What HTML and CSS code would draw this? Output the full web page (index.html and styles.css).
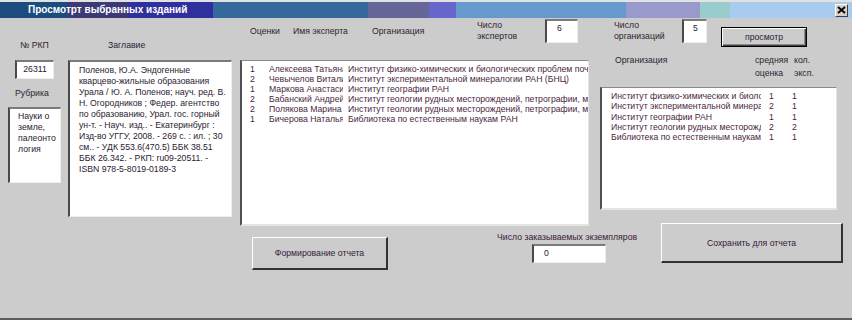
FILE: index.html
```html
<!DOCTYPE html>
<html lang="ru">
<head>
    <meta charset="UTF-8">
    <title>Просмотрт выбранных изданий</title>
    <link rel="stylesheet" href="styles.css">
</head>
<body>
    <div class="window">
        <div class="titlebar">
            <span class="title">Просмотрт выбранных изданий</span>
            <span class="close">
                <svg width="9" height="8" viewBox="0 0 9 8"><path d="M1 1L8 7M8 1L1 7" stroke="#000" stroke-width="1.8" fill="none"/></svg>
            </span>
        </div>

        <div class="form">
            <!-- карточка издания -->
            <div class="left">
                <div class="left-head">
                    <span class="lbl-rkp">№ РКП</span>
                    <span>Заглавие</span>
                </div>
                <div class="left-body">
                    <div class="rkp-col">
                        <div class="field rkp">26311</div>
                        <div class="lbl-rubric">Рубрика</div>
                        <div class="field rubric">Науки о<br>земле,<br>палеонто<br>логия</div>
                    </div>
                    <div class="field title-box">
                        Поленов, Ю.А. Эндогенные<br>
                        кварцево-жильные образования<br>
                        Урала / Ю. А. Поленов; науч. ред. В.<br>
                        Н. Огородников ; Федер. агентство<br>
                        по образованию, Урал. гос. горный<br>
                        ун-т. - Науч. изд.. - Екатеринбург :<br>
                        Изд-во УГГУ, 2008. - 269 с. : ил. ; 30<br>
                        см.. - УДК 553.6(470.5) ББК 38.51<br>
                        ББК 26.342. - РКП: ru09-20511. -<br>
                        ISBN 978-5-8019-0189-3
                    </div>
                </div>
            </div>

            <div class="main">
                <div class="topbar">
                    <div class="list-head">
                        <span class="h-score">Оценки</span>
                        <span class="h-name">Имя эксперта</span>
                        <span class="h-org">Организация</span>
                    </div>
                    <div class="count-lbl">Число<br>экспертов</div>
                    <div class="field num num-exp">6</div>
                    <div class="count-lbl count-org">Число<br>организаций</div>
                    <div class="field num num-org">5</div>
                    <button class="btn btn-default">просмотр</button>
                </div>

                <div class="panels">
                    <!-- оценки экспертов -->
                    <div class="experts">
                        <div class="listbox expert-list">
                            <div class="row"><span class="c-score">1</span><span class="c-name">Алексеева Татьяна</span><span class="c-org">Институт физико-химических и биологических проблем почвоведения РАН</span></div>
                            <div class="row"><span class="c-score">2</span><span class="c-name">Чевычелов Виталий</span><span class="c-org">Институт экспериментальной минералогии РАН (БНЦ)</span></div>
                            <div class="row"><span class="c-score">1</span><span class="c-name">Маркова Анастасия</span><span class="c-org">Институт географии РАН</span></div>
                            <div class="row"><span class="c-score">2</span><span class="c-name">Бабанский Андрей</span><span class="c-org">Институт геологии рудных месторождений, петрографии, минералогии и геохимии РАН</span></div>
                            <div class="row"><span class="c-score">2</span><span class="c-name">Полякова Марина</span><span class="c-org">Институт геологии рудных месторождений, петрографии, минералогии и геохимии РАН</span></div>
                            <div class="row"><span class="c-score">1</span><span class="c-name">Бичерова Наталья</span><span class="c-org">Библиотека по естественным наукам РАН</span></div>
                        </div>
                        <div class="experts-foot">
                            <button class="btn btn-report">Формирование отчета</button>
                            <div class="copies">
                                <div class="copies-lbl">Число заказываемых экземпляров</div>
                                <div class="field copies-input">0</div>
                            </div>
                        </div>
                    </div>

                    <!-- сводка по организациям -->
                    <div class="orgs">
                        <div class="orgs-head">
                            <span class="oh-org">Организация</span>
                            <span>средняя</span>
                            <span>кол.</span>
                            <span></span>
                            <span>оценка</span>
                            <span>эксп.</span>
                        </div>
                        <div class="listbox org-list">
                            <div class="row"><span class="c-o">Институт физико-химических и биологических проблем почвоведения РАН</span><span class="c-avg">1</span><span>1</span></div>
                            <div class="row"><span class="c-o">Институт экспериментальной минералогии РАН (БНЦ)</span><span class="c-avg">2</span><span>1</span></div>
                            <div class="row"><span class="c-o">Институт географии РАН</span><span class="c-avg">1</span><span>1</span></div>
                            <div class="row"><span class="c-o">Институт геологии рудных месторождений, петрографии, минералогии и геохимии РАН</span><span class="c-avg">2</span><span>2</span></div>
                            <div class="row"><span class="c-o">Библиотека по естественным наукам РАН</span><span class="c-avg">1</span><span>1</span></div>
                        </div>
                        <button class="btn btn-save">Сохранить для отчета</button>
                    </div>
                </div>
            </div>
        </div>
    </div>
</body>
</html>
```

FILE: styles.css
```css
body {
    margin: 0;
    background: #cccccc;
    font-family: "Liberation Sans", Arial, sans-serif;
    font-size: 8.7px;
    color: #2d2430;
}

.window {
    width: 852px;
    height: 320px;
    box-sizing: border-box;
    background: #cccccc;
    border-top: 2px solid #e2e2e2;
    border-bottom: 2px solid #5c5c5c;
    overflow: hidden;
}

.titlebar {
    display: flex;
    align-items: center;
    height: 16px;
    background: linear-gradient(to right,
        #1b4c7e 0 67px,
        #3b3a77 67px 128px,
        #2f2f9e 128px 213px,
        #35689b 213px 368px,
        #666699 368px 429px,
        #6666cc 429px 456px,
        #6699cc 456px 626px,
        #9999cc 626px 700px,
        #99cccc 700px 730px,
        #a8cbf0 730px);
}

.title {
    padding-left: 28px;
    color: #fff;
    font-weight: bold;
    font-size: 10px;
    line-height: 16px;
}

.close {
    margin-left: auto;
    margin-right: 4px;
    width: 13px;
    height: 13px;
    box-sizing: border-box;
    background: #d4d0c8;
    border: 1px solid;
    border-color: #fff #404040 #404040 #fff;
    display: flex;
    align-items: center;
    justify-content: center;
}

.form {
    display: flex;
    align-items: flex-start;
    padding-left: 8px;
}

.field {
    background: #fff;
    box-sizing: border-box;
    border-style: solid;
    border-width: 2px 1px 1px 2px;
    border-color: #7a7a7a #eeeeee #eeeeee #4a4a4a;
    color: #2a1a30;
}

/* левая колонка */
.left {
    flex: none;
    width: 224px;
    margin-top: 22px;
}

.left-head {
    display: flex;
    height: 11px;
    line-height: 11px;
    margin-bottom: 9px;
}

.lbl-rkp {
    margin-left: 12px;
    width: 88px;
}

.left-body {
    display: flex;
    align-items: flex-start;
    gap: 7px;
}

.rkp-col {
    flex: none;
    width: 53px;
}

.rkp {
    margin-left: 7px;
    width: 39px;
    height: 19px;
    line-height: 15px;
    text-align: center;
}

.lbl-rubric {
    margin: 9px 0 0 7px;
    line-height: 11px;
}

.rubric {
    margin-top: 8px;
    width: 53px;
    height: 76px;
    padding: 2px 0 0 8px;
    line-height: 11px;
}

.title-box {
    flex: none;
    width: 164px;
    height: 157px;
    padding: 3px 0 0 9px;
    line-height: 11px;
    white-space: nowrap;
    overflow: hidden;
}

/* основная часть */
.main {
    flex: none;
    margin-left: 8px;
    width: 612px;
}

.topbar {
    display: flex;
    align-items: flex-start;
    height: 36px;
}

.topbar > * {
    flex: none;
}

.list-head {
    display: flex;
    margin: 8px 0 0 10px;
    line-height: 11px;
}

.h-score { width: 43px; }
.h-name { width: 79px; }
.h-org { width: 105px; }

.count-lbl {
    width: 68px;
    margin-top: 2px;
    line-height: 11px;
}

.count-org {
    margin-left: 36px;
}

.num {
    margin-top: 1px;
    height: 24px;
    line-height: 14px;
}

.num-exp {
    width: 33px;
    padding-left: 10px;
}

.num-org {
    width: 25px;
    padding-left: 9px;
}

.btn {
    font: inherit;
    color: #33203a;
    background: #cccccc;
    box-sizing: border-box;
    border: 1px solid;
    border-color: #fff #404040 #404040 #fff;
    padding: 0;
    cursor: pointer;
}

.btn-default {
    margin: 9px 0 0 14px;
    width: 86px;
    height: 20px;
    border-color: #000;
    box-shadow: inset 1px 1px #fff, inset -1px -1px #404040, inset -2px -2px #8a8a8a;
}

.panels {
    display: flex;
    align-items: flex-start;
}

.listbox {
    background: #fff;
    box-sizing: border-box;
    border-style: solid;
    border-width: 1px 1px 2px 2px;
    border-color: #8a8a8a #e4e4e4 #e4e4e4 #505050;
    overflow: hidden;
    color: #4a1f3f;
}

.row {
    display: flex;
    white-space: nowrap;
}

.experts {
    flex: none;
    width: 349px;
}

.expert-list {
    margin-top: 6px;
    height: 166px;
    padding: 3px 0 0 8px;
    line-height: 10px;
}

.c-score {
    flex: none;
    width: 19px;
}

.c-name {
    flex: none;
    width: 74px;
    margin-right: 5px;
    overflow: hidden;
}

.c-org {
    flex: 1;
    min-width: 0;
    overflow: hidden;
}

.experts-foot {
    display: flex;
    align-items: flex-start;
    margin-top: 6px;
    white-space: nowrap;
}

.btn-report {
    flex: none;
    margin: 5px 0 0 12px;
    width: 136px;
    height: 33px;
    border-width: 1px 2px 2px 1px;
    border-color: #fff #333 #333 #fff;
}

.copies {
    flex: none;
    margin-left: 109px;
}

.copies-lbl {
    line-height: 11px;
    color: #3a1838;
}

.copies-input {
    margin: 1px 0 0 35px;
    width: 74px;
    height: 19px;
    padding-left: 10px;
    line-height: 14px;
}

.orgs {
    flex: none;
    margin-left: 11px;
    width: 243px;
}

.orgs-head {
    display: grid;
    grid-template-columns: 155px 39px 1fr;
    height: 26px;
    line-height: 13px;
}

.oh-org {
    padding-left: 15px;
}

.org-list {
    margin-top: 7px;
    width: 237px;
    height: 123px;
    padding: 3px 0 0 9px;
    line-height: 10.3px;
}

.c-o {
    flex: none;
    width: 150px;
    overflow: hidden;
}

.c-avg {
    flex: none;
    margin-left: 8px;
    width: 23px;
}

.btn-save {
    display: block;
    margin: 13px 0 0 61px;
    width: 182px;
    height: 40px;
    border-width: 1px 2px 2px 1px;
    border-color: #fff #333 #333 #fff;
}
```
